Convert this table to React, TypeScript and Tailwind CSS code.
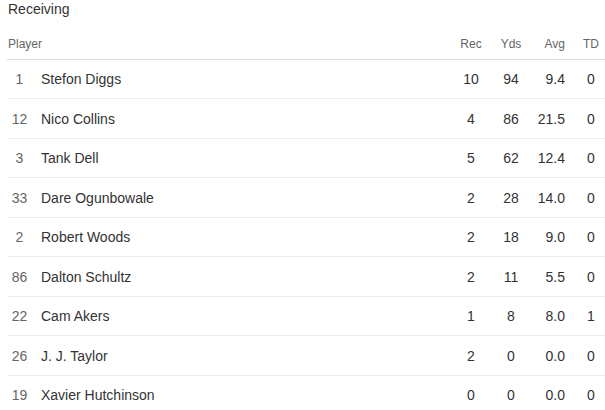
const rows = [
  { no: 1, name: "Stefon Diggs", rec: 10, yds: 94, avg: "9.4", td: 0 },
  { no: 12, name: "Nico Collins", rec: 4, yds: 86, avg: "21.5", td: 0 },
  { no: 3, name: "Tank Dell", rec: 5, yds: 62, avg: "12.4", td: 0 },
  { no: 33, name: "Dare Ogunbowale", rec: 2, yds: 28, avg: "14.0", td: 0 },
  { no: 2, name: "Robert Woods", rec: 2, yds: 18, avg: "9.0", td: 0 },
  { no: 86, name: "Dalton Schultz", rec: 2, yds: 11, avg: "5.5", td: 0 },
  { no: 22, name: "Cam Akers", rec: 1, yds: 8, avg: "8.0", td: 1 },
  { no: 26, name: "J. J. Taylor", rec: 2, yds: 0, avg: "0.0", td: 0 },
  { no: 19, name: "Xavier Hutchinson", rec: 0, yds: 0, avg: "0.0", td: 0 },
];

export default function App() {
  return (
    <div
      className="w-[605px] h-[410px] overflow-hidden bg-white text-[#333]"
      style={{ fontFamily: '"Liberation Sans", Arial, sans-serif' }}
    >
      <div className="pl-[8px] h-[18px] leading-[18px] text-[14px] text-[#333]">Receiving</div>
      <div className="ml-[7px] mt-[11px] w-[598px]">
        {/* header */}
        <div className="flex items-center h-[30.5px] border-b border-[#dcdcdc] text-[12px] text-[#666]">
          <div className="flex-1 pl-[1px]">Player</div>
          <div className="w-[40px] text-center">Rec</div>
          <div className="w-[40px] text-center">Yds</div>
          <div className="w-[46px] text-right pr-[12px]">Avg</div>
          <div className="w-[28px] text-center">TD</div>
        </div>
        {rows.map((r) => (
          <div
            key={r.no}
            className="flex items-center h-[39.5px] pt-[2px] border-b border-[#ececec] text-[14px]"
          >
            <div className="w-[25px] text-center text-[#666]">{r.no}</div>
            <div className="flex-1 ml-[9px] text-[#333]">{r.name}</div>
            <div className="w-[40px] text-center">{r.rec}</div>
            <div className="w-[40px] text-center">{r.yds}</div>
            <div className="w-[46px] text-right pr-[12px]">{r.avg}</div>
            <div className="w-[28px] text-center">{r.td}</div>
          </div>
        ))}
      </div>
    </div>
  );
}
